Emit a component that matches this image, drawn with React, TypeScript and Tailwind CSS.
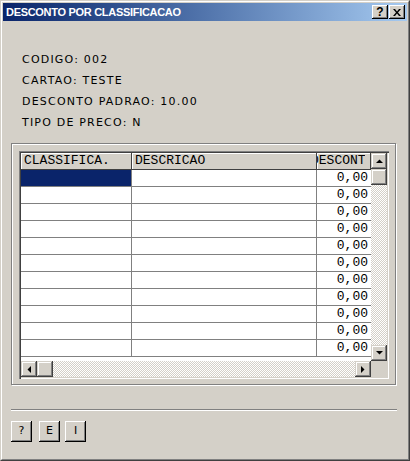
import React from "react";

// classic 3d edges
const raised =
  "shadow-[inset_-1px_-1px_#404040,inset_1px_1px_#d4d0c8,inset_-2px_-2px_#808080,inset_2px_2px_#ffffff]";
const pushBtn =
  "shadow-[inset_-1px_-1px_#000000,inset_1px_1px_#ffffff,inset_-2px_-2px_#808080,inset_2px_2px_#d4d0c8]";
const sunken =
  "shadow-[inset_1px_1px_#808080,inset_2px_2px_#404040,inset_-1px_-1px_#ffffff,inset_-2px_-2px_#d4d0c8]";
const dither =
  "bg-[repeating-conic-gradient(#d4d0c8_0_25%,#ffffff_0_50%)] bg-[length:2px_2px]";

const ui = { fontFamily: '"DejaVu Sans", Verdana, sans-serif' };
const mono = { fontFamily: '"Liberation Mono", "Courier New", monospace' };

const ROWS = 11;

function Arrow({ dir }: { dir: "up" | "down" | "left" | "right" }) {
  const pts: Record<string, string> = {
    up: "0,4 7,4 3.5,0.5",
    down: "0,0 7,0 3.5,3.5",
    left: "4,0 4,7 0.5,3.5",
    right: "0,0 0,7 3.5,3.5",
  };
  const vert = dir === "up" || dir === "down";
  return (
    <svg width={vert ? 7 : 4} height={vert ? 4 : 7} viewBox={vert ? "0 0 7 4" : "0 0 4 7"}>
      <polygon points={pts[dir]} fill="#000" />
    </svg>
  );
}

function ScrollBtn({ dir }: { dir: "up" | "down" | "left" | "right" }) {
  return (
    <div className={`flex h-[16px] w-[16px] shrink-0 items-center justify-center bg-[#d4d0c8] ${raised}`}>
      <Arrow dir={dir} />
    </div>
  );
}

export default function App() {
  return (
    <div
      className="h-[461px] w-[410px] border border-t-[#d4d0c8] border-l-[#d4d0c8] border-r-[#404040] border-b-[#404040] bg-[#d4d0c8]"
      style={ui}
    >
      <div className="flex h-full flex-col border border-t-white border-l-white border-r-[#808080] border-b-[#808080] p-px">
        {/* title bar */}
        <div className="flex h-[18px] shrink-0 items-center justify-between bg-gradient-to-r from-[#0a246a] to-[#a6caf0] pl-[3px] pr-[2px]">
          <span
            className="text-[11px] font-bold tracking-[-0.3px] text-white"
            style={{ fontFamily: '"Liberation Sans", Arial, sans-serif' }}
          >
            DESCONTO POR CLASSIFICACAO
          </span>
          <div className="flex gap-[1px]">
            <div className={`flex h-[14px] w-[16px] items-center justify-center bg-[#d4d0c8] ${pushBtn}`}>
              <span
                className="text-[12px] font-bold leading-none text-black"
                style={{ fontFamily: '"Liberation Sans", Arial, sans-serif' }}
              >
                ?
              </span>
            </div>
            <div className={`flex h-[14px] w-[16px] items-center justify-center bg-[#d4d0c8] ${pushBtn}`}>
              <svg width="8" height="7" viewBox="0 0 8 7">
                <path d="M0 0h2l2 2.5L6 0h2L5 3.5 8 7H6L4 4.5 2 7H0l3-3.5z" fill="#000" />
              </svg>
            </div>
          </div>
        </div>

        {/* info */}
        <div className="mt-[28px] pl-[19px] text-[11px] leading-[21px] tracking-[1.2px] text-black">
          <div>CODIGO: 002</div>
          <div>CARTAO: TESTE</div>
          <div>DESCONTO PADRAO: 10.00</div>
          <div>TIPO DE PRECO: N</div>
        </div>

        {/* group box */}
        <div className="ml-[8px] mt-[10px] h-[242px] w-[385px] border border-[#808080] pl-[7px] pt-[7px] shadow-[inset_1px_1px_#ffffff,1px_1px_#ffffff]">
          <div className={`h-[228px] w-[370px] bg-[#d4d0c8] p-[2px] ${sunken}`} style={mono}>
            <div className="flex h-[208px]">
              <div className="h-[208px] w-[350px] overflow-hidden bg-white text-[13px] text-black">
                {/* header */}
                <div className="flex h-[17px] bg-[#d4d0c8] leading-[16px]">
                  <div className="h-[17px] w-[111px] shrink-0 border-b border-r border-[#404040] pl-[3px] shadow-[inset_1px_1px_#ffffff]">
                    CLASSIFICA.
                  </div>
                  <div className="h-[17px] w-[185px] shrink-0 border-b border-r border-[#404040] pl-[3px] shadow-[inset_1px_1px_#ffffff]">
                    DESCRICAO
                  </div>
                  <div className="h-[17px] w-[54px] shrink-0 border-b border-r border-[#404040] shadow-[inset_1px_1px_#ffffff]">
                    <div className="w-[48px] overflow-hidden whitespace-nowrap">
                      <span className="ml-[-6px]">DESCONTO</span>
                    </div>
                  </div>
                </div>
                {/* rows */}
                {Array.from({ length: ROWS }).map((_, i) => (
                  <div key={i} className="flex h-[17px] border-b border-[#808080] leading-[16px]">
                    <div
                      className={`w-[111px] shrink-0 border-r border-[#808080] ${i === 0 ? "bg-[#0a246a]" : ""}`}
                    />
                    <div className="w-[185px] shrink-0 border-r border-[#808080]" />
                    <div className="w-[54px] shrink-0 pr-[3px] text-right">0,00</div>
                  </div>
                ))}
              </div>
              {/* vertical scrollbar */}
              <div className={`flex h-[208px] w-[16px] flex-col ${dither}`}>
                <ScrollBtn dir="up" />
                <div className={`h-[16px] w-[16px] bg-[#d4d0c8] ${raised}`} />
                <div className="flex-1" />
                <ScrollBtn dir="down" />
              </div>
            </div>
            {/* horizontal scrollbar */}
            <div className="flex h-[16px]">
              <div className={`flex h-[16px] w-[350px] ${dither}`}>
                <ScrollBtn dir="left" />
                <div className={`h-[16px] w-[16px] bg-[#d4d0c8] ${raised}`} />
                <div className="flex-1" />
                <ScrollBtn dir="right" />
              </div>
              <div className="h-[16px] w-[16px] bg-[#d4d0c8]" />
            </div>
          </div>
        </div>

        {/* separator */}
        <div className="ml-[8px] mt-[24px] h-[2px] w-[386px] border-b border-t border-b-white border-t-[#808080]" />

        {/* buttons */}
        <div className="ml-[8px] mt-[10px] flex text-[11px] text-black">
          <button className={`h-[21px] w-[21px] bg-[#d4d0c8] ${pushBtn}`}>?</button>
          <button className={`ml-[7px] h-[21px] w-[21px] bg-[#d4d0c8] ${pushBtn}`}>E</button>
          <button className={`ml-[5px] h-[21px] w-[21px] bg-[#d4d0c8] ${pushBtn}`}>I</button>
        </div>
      </div>
    </div>
  );
}
